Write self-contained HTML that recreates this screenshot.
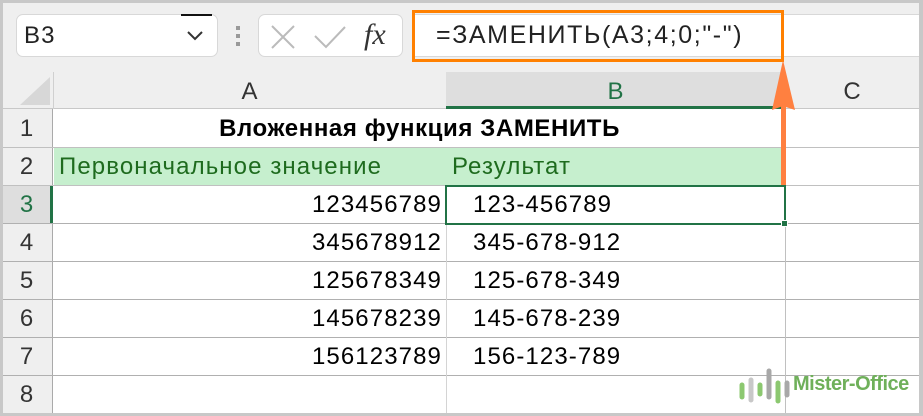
<!DOCTYPE html>
<html><head><meta charset="utf-8"><style>
*{margin:0;padding:0;box-sizing:border-box}
body{width:923px;height:416px;overflow:hidden;background:#fff;font-family:"Liberation Sans","Noto Sans CJK SC",sans-serif;position:relative}
.a{position:absolute}
.t{font-size:24px;line-height:38px;white-space:nowrap;letter-spacing:1.1px}
</style></head><body>
<div class="a" style="left:0;top:0;width:923px;height:72px;background:#efefef"></div>
<div class="a" style="left:0;top:0;width:923px;height:3px;background:#c8c8c8"></div>
<div class="a" style="left:0;top:0;width:3px;height:416px;background:#c8c8c8"></div>
<div class="a" style="left:919px;top:0;width:4px;height:416px;background:#c8c8c8"></div>
<div class="a" style="left:0;top:413px;width:923px;height:3px;background:#c8c8c8"></div>
<div class="a" style="left:16px;top:14px;width:202px;height:43px;background:#fff;border:1px solid #d8d8d8;border-radius:7px"></div>
<div class="a t" style="left:24px;top:17px;color:#222">B3</div>
<div class="a" style="left:181px;top:14px;width:31px;height:2px;background:#111"></div>
<svg class="a" style="left:186px;top:30px" width="18" height="12"><path d="M2 2 L9 9 L16 2" stroke="#333" stroke-width="2" fill="none"/></svg>
<div class="a" style="left:236px;top:26px;width:4px;height:4px;background:#999"></div>
<div class="a" style="left:236px;top:34px;width:4px;height:4px;background:#999"></div>
<div class="a" style="left:236px;top:42px;width:4px;height:4px;background:#999"></div>
<div class="a" style="left:258px;top:14px;width:145px;height:43px;background:#fff;border:1px solid #d8d8d8;border-radius:7px"></div>
<svg class="a" style="left:270px;top:24px" width="26" height="26"><path d="M2 2 L24 24 M24 2 L2 24" stroke="#bbb" stroke-width="2"/></svg>
<svg class="a" style="left:313px;top:24px" width="34" height="26"><path d="M2 12 L13 23 L32 3" stroke="#bbb" stroke-width="2" fill="none"/></svg>
<div class="a" style="left:364px;top:14px;font-family:'Liberation Serif',serif;font-style:italic;font-size:30px;color:#333;line-height:42px">fx</div>
<div class="a" style="left:412px;top:14px;width:507px;height:43px;background:#fff;border-top:1px solid #d8d8d8;border-bottom:1px solid #d8d8d8"></div>
<div class="a" style="left:412px;top:10px;width:372px;height:52px;border:3px solid #ff8000"></div>
<div class="a t" style="left:436px;top:16px;color:#222;font-size:25px;letter-spacing:1.6px">=ЗАМЕНИТЬ(A3;4;0;"-")</div>
<div class="a" style="left:3px;top:72px;width:916px;height:37px;background:#efefef;border-bottom:1px solid #c8c8c8"></div>
<svg class="a" style="left:18px;top:75px" width="34" height="32"><path d="M32 2 L32 30 L2 30 Z" fill="#d7d7d7"/></svg>
<div class="a" style="left:53px;top:72px;width:1px;height:37px;background:#d0d0d0"></div>
<div class="a" style="left:446px;top:72px;width:339px;height:37px;background:#dedede;border-bottom:3px solid #217346"></div>
<div class="a" style="left:785px;top:72px;width:1px;height:37px;background:#d0d0d0"></div>
<div class="a t" style="left:53px;top:73px;width:393px;text-align:center;color:#333;letter-spacing:0">A</div>
<div class="a t" style="left:446px;top:73px;width:339px;text-align:center;color:#217346;letter-spacing:0">B</div>
<div class="a t" style="left:785px;top:73px;width:134px;text-align:center;color:#333;letter-spacing:0">C</div>
<div class="a" style="left:3px;top:109px;width:50px;height:304px;background:#efefef;border-right:1px solid #aaa"></div>
<div class="a" style="left:3px;top:185px;width:50px;height:38px;background:#dedede;border-right:3px solid #217346"></div>
<div class="a t" style="left:3px;top:110px;width:47px;text-align:center;color:#333;letter-spacing:0">1</div>
<div class="a t" style="left:3px;top:148px;width:47px;text-align:center;color:#333;letter-spacing:0">2</div>
<div class="a t" style="left:3px;top:186px;width:47px;text-align:center;color:#217346;letter-spacing:0">3</div>
<div class="a t" style="left:3px;top:224px;width:47px;text-align:center;color:#333;letter-spacing:0">4</div>
<div class="a t" style="left:3px;top:262px;width:47px;text-align:center;color:#333;letter-spacing:0">5</div>
<div class="a t" style="left:3px;top:300px;width:47px;text-align:center;color:#333;letter-spacing:0">6</div>
<div class="a t" style="left:3px;top:338px;width:47px;text-align:center;color:#333;letter-spacing:0">7</div>
<div class="a t" style="left:3px;top:376px;width:47px;text-align:center;color:#333;letter-spacing:0">8</div>
<div class="a" style="left:54px;top:147px;width:731px;height:38px;background:#c6efce"></div>
<div class="a" style="left:3px;top:147px;width:916px;height:1px;background:#c0c0c0"></div>
<div class="a" style="left:3px;top:185px;width:916px;height:1px;background:#c0c0c0"></div>
<div class="a" style="left:3px;top:223px;width:916px;height:1px;background:#b0b0b0"></div>
<div class="a" style="left:3px;top:261px;width:916px;height:1px;background:#b0b0b0"></div>
<div class="a" style="left:3px;top:299px;width:916px;height:1px;background:#b0b0b0"></div>
<div class="a" style="left:3px;top:337px;width:916px;height:1px;background:#b0b0b0"></div>
<div class="a" style="left:3px;top:375px;width:916px;height:1px;background:#b0b0b0"></div>
<div class="a" style="left:446px;top:185px;width:1px;height:228px;background:#d4d4d4"></div>
<div class="a" style="left:785px;top:109px;width:1px;height:304px;background:#c0c0c0"></div>
<div class="a t" style="left:54px;top:110px;width:731px;text-align:center;font-weight:bold;color:#000;letter-spacing:0.6px">Вложенная функция ЗАМЕНИТЬ</div>
<div class="a t" style="left:59px;top:148px;color:#1e6b1e">Первоначальное значение</div>
<div class="a t" style="left:452px;top:148px;color:#1e6b1e">Результат</div>
<div class="a t" style="left:54px;top:186px;width:388px;text-align:right">123456789</div>
<div class="a t" style="left:54px;top:224px;width:388px;text-align:right">345678912</div>
<div class="a t" style="left:54px;top:262px;width:388px;text-align:right">125678349</div>
<div class="a t" style="left:54px;top:300px;width:388px;text-align:right">145678239</div>
<div class="a t" style="left:54px;top:338px;width:388px;text-align:right">156123789</div>
<div class="a t" style="left:473px;top:186px">123-456789</div>
<div class="a t" style="left:473px;top:224px">345-678-912</div>
<div class="a t" style="left:473px;top:262px">125-678-349</div>
<div class="a t" style="left:473px;top:300px">145-678-239</div>
<div class="a t" style="left:473px;top:338px">156-123-789</div>
<div class="a" style="left:445px;top:185px;width:341px;height:40px;border:2px solid #217346"></div>
<div class="a" style="left:781px;top:220px;width:7px;height:7px;background:#217346;border:1px solid #fff"></div>
<svg class="a" style="left:768px;top:58px" width="32" height="130"><path d="M15 2 L4 52 L15 48 L27 52 Z" fill="#ff8040"/><rect x="13" y="45" width="5" height="82" fill="#ff8040"/></svg>
<svg class="a" style="left:738px;top:367px" width="70" height="40">
<g stroke-linecap="round" stroke-width="5">
<line x1="4" y1="18" x2="4" y2="30" stroke="#8cc870"/>
<line x1="13" y1="13" x2="13" y2="33" stroke="#c8c8c8"/>
<line x1="22" y1="18" x2="22" y2="27" stroke="#8cc870"/>
<line x1="31" y1="4" x2="31" y2="30" stroke="#a8a8a8"/>
<line x1="40" y1="16" x2="40" y2="34" stroke="#8cc870"/>
<line x1="49" y1="16" x2="49" y2="28" stroke="#a8a8a8"/>
</g></svg>
<div class="a" style="left:793px;top:372px;font-size:20px;font-weight:bold;color:#6fb05a;line-height:24px;letter-spacing:-0.5px">Mister-Office</div>
</body></html>
